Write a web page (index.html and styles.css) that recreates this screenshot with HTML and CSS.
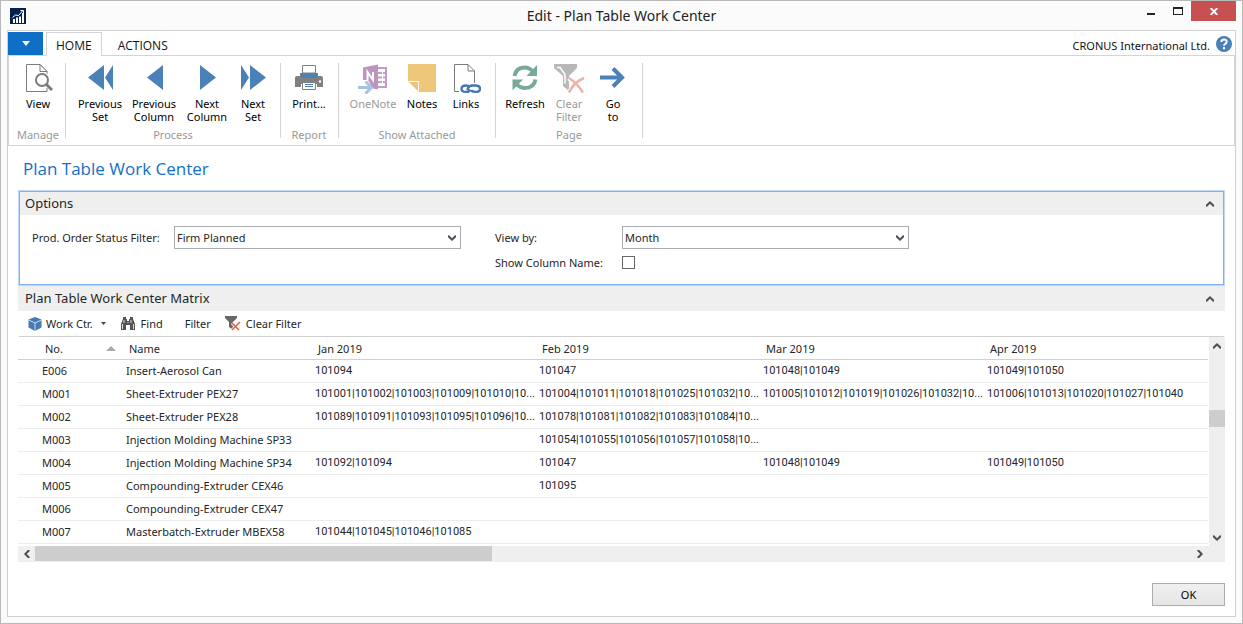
FILE: index.html
```html
<!DOCTYPE html>
<html lang="en">
<head>
<meta charset="utf-8">
<title>Edit - Plan Table Work Center</title>
<link rel="stylesheet" href="styles.css">
</head>
<body>
<svg class="defs" aria-hidden="true">
  <symbol id="chev" viewBox="0 0 8 6"><path d="M0 .8 .8 0 4 3.200 7.200 0 8 .8V2.200L4 6 0 2.200z"/></symbol>
</svg>
<div class="window">
  <header class="titlebar">
    <svg class="app-icon" viewBox="0 0 16 16"><rect width="16" height="16" fill="#06224c"/><path d="M3 11h2v4H3zM6 9.500h2V15H6zM9 8.500h2V15H9zM12 5h2v10h-2z" fill="#fff"/><path d="M2.500 9.500 5.500 7 8.500 7.500 13 2.500M10.500 2.500H13.500V5" fill="none" stroke="#fff"/></svg>
    <h1 class="window-title">Edit - Plan Table Work Center</h1>
    <div class="controls">
      <button class="ctl" aria-label="Minimize"><svg width="8" height="10" viewBox="0 0 8 10"><path d="M0 7h8v2H0z" fill="#222"/></svg></button>
      <button class="ctl" aria-label="Maximize"><svg width="10" height="8" viewBox="0 0 10 8"><path d="M0 0h10v8H0zM1 2v5h8V2z" fill="#222" fill-rule="evenodd"/></svg></button>
      <button class="ctl close" aria-label="Close"><svg width="8" height="7" viewBox="0 0 8 7"><path d="M.7 0 7.300 7M7.300 0 .7 7" stroke="#fff" stroke-width="1.900"/></svg></button>
    </div>
  </header>

  <main class="frame">
    <nav class="tabs">
      <button class="app-menu" aria-label="Application menu"><svg width="8" height="5" viewBox="0 0 8 5"><path d="M0 0h8L4 5z" fill="#fff"/></svg></button>
      <button class="tab active">HOME</button>
      <button class="tab">ACTIONS</button>
      <span class="company">CRONUS International Ltd.</span>
      <button class="help" aria-label="Help"><svg width="16" height="16" viewBox="0 0 16 16"><circle cx="8" cy="8" r="8" fill="#4a80b5"/><path d="M5.300 6c0-3.400 5.400-3.200 5.400-.3C10.700 7.700 8 7.700 8 9.800M8 11v2.200" fill="none" stroke="#fff" stroke-width="2"/></svg></button>
    </nav>

    <section class="ribbon">
      <div class="group manage">
        <div class="cmds">
          <button class="cmd"><svg width="30" height="30" viewBox="0 0 30 30"><path d="M24 24v3.500H3.500V.5H17L24 7.500V10" fill="none" stroke="#7c7c7c"/><circle cx="19" cy="16" r="8" fill="#fff"/><path d="M17 .5V7.500h7z" fill="#fff" stroke="#7c7c7c"/><circle cx="19" cy="16" r="6" fill="none" stroke="#7c7c7c" stroke-width="2"/><path d="m23.500 20.500 5.500 5.500" stroke="#7c7c7c" stroke-width="3"/></svg>View</button>
        </div>
        <div class="caption">Manage</div>
      </div>
      <div class="group">
        <div class="cmds">
          <button class="cmd wide"><svg width="30" height="30" viewBox="0 0 30 30"><path d="M3 13.500 19 1v25zM20 13.500l8-12.500v25z" fill="#4b81b9"/></svg>Previous Set</button>
          <button class="cmd wide"><svg width="30" height="30" viewBox="0 0 30 30"><path d="M8 13.500 24 1v25z" fill="#4b81b9"/></svg>Previous Column</button>
          <button class="cmd mid"><svg width="30" height="30" viewBox="0 0 30 30"><path d="M24 13.500 8 1v25z" fill="#4b81b9"/></svg>Next Column</button>
          <button class="cmd slim"><svg width="30" height="30" viewBox="0 0 30 30"><path d="M28 13.500 12 1v25zM11 13.500 3 1v25z" fill="#4b81b9"/></svg>Next Set</button>
        </div>
        <div class="caption">Process</div>
      </div>
      <div class="group report">
        <div class="cmds">
          <button class="cmd"><svg width="30" height="30" viewBox="0 0 30 30"><path d="M3 14q-2 0-2 2v7h6v-3h16v3h6v-7q0-2-2-2h-3V9h-2v6H8V9H6v5z" fill="#808080"/><path d="M3 12h24q2 0 2 2v3H1v-3q0-2 2-2z" fill="#808080"/><path d="M7 9h16v5H7z" fill="#4b81b9"/><path d="M8.500 1.500h13V9h-13z" fill="#fff" stroke="#808080"/><path d="M8.500 18.500h13v7h-13z" fill="#fff" stroke="#808080"/><path d="M11 20.500h8M11 22.500h8" stroke="#4b81b9"/><circle cx="26" cy="17.500" r="1.200" fill="#fff"/></svg>Print...</button>
        </div>
        <div class="caption">Report</div>
      </div>
      <div class="group">
        <div class="cmds">
          <button class="cmd wide" disabled><svg width="30" height="30" viewBox="0 0 30 30"><path d="M19 4h9v19h-9" fill="none" stroke="#c39dc2" stroke-width="2"/><path d="M20 9h8M20 13.500h8M20 18h8" stroke="#c39dc2" stroke-width="2"/><path d="M24.500 5v17" stroke="#fff"/><path d="M5 3.500 20 .5v25l-5-1L10 16H5z" fill="#bd94bd"/><path d="M9.500 16V8l5.500 8V8" fill="none" stroke="#fff" stroke-width="2"/><path d="M0 23.500h12M7.500 17.500l6 6-6 6" fill="none" stroke="#a8c3e0" stroke-width="3"/></svg>OneNote</button>
          <button class="cmd note"><svg width="30" height="30" viewBox="0 0 30 30"><path d="M1 0h28v28H12L1 17z" fill="#efc77b"/><path d="M1 17h11v11z" fill="#eec376"/><path d="M1.500 17.500H11.500V27" fill="none" stroke="#fff"/></svg>Notes</button>
          <button class="cmd"><svg width="30" height="30" viewBox="0 0 30 30"><path d="M8 27.500H3.500V.5H17L23.500 7v12M17 .5V7h6.500" fill="none" stroke="#7c7c7c"/><g fill="none" stroke="#4477b0" stroke-width="2.400"><path d="M19 23q-1.500-1.500-4-1.500-4.500 0-4.500 3.200t4.500 3.200q3 0 4.500-2.200"/><path d="M16.500 26q.5-4.500 5.500-4.500h2.500q4.500 0 4.500 3.200t-4.500 3.200q-3 0-4.500-1.500"/></g></svg>Links</button>
        </div>
        <div class="caption">Show Attached</div>
      </div>
      <div class="group">
        <div class="cmds">
          <button class="cmd"><svg width="30" height="30" viewBox="0 0 30 30"><g fill="none" stroke="#78ab97" stroke-width="4"><path d="M4.500 12Q6 3.500 14.500 3.500q5 0 8.500 4M25.500 15.500Q24 24 15 24q-5 0-8.500-4"/></g><path d="M27 1v11H16.500zM2.500 26.500V15.500H13z" fill="#78ab97"/></svg>Refresh</button>
          <button class="cmd" disabled><svg width="32" height="30" viewBox="0 0 32 30"><path d="M1 0h23v4l-8 8v15l-6-5V12L1 4z" fill="#b8b8b8"/><path d="M4 3.500h3l5 7v9" fill="none" stroke="#fff" stroke-width="1.500"/><path d="m16 14 14 14M31 14 16 28" stroke="#fff" stroke-width="5"/><path d="M16 14q8 5 14 14.500M31 14q-10 4-15 14.500" fill="none" stroke="#efb1a4" stroke-width="2.500"/></svg>Clear Filter</button>
          <button class="cmd go"><svg width="30" height="30" viewBox="0 0 30 30"><path d="M2 13.500h23M15 4.500l9 9-9 9" fill="none" stroke="#4b81b9" stroke-width="4"/></svg>Go<br>to</button>
        </div>
        <div class="caption">Page</div>
      </div>
    </section>

    <div class="content">
      <h2 class="page-title">Plan Table Work Center</h2>

      <section class="panel options">
        <header class="panel-head">Options<button class="collapse" aria-label="Collapse options"><svg class="chev up"><use href="#chev"/></svg></button></header>
        <div class="fields">
          <label for="status">Prod. Order Status Filter:</label>
          <span class="combo"><select id="status"><option>Firm Planned</option></select><svg class="chev"><use href="#chev"/></svg></span>
          <label for="view" class="second">View by:</label>
          <span class="combo"><select id="view"><option>Month</option></select><svg class="chev"><use href="#chev"/></svg></span>
          <label for="colname" class="second">Show Column Name:</label>
          <input type="checkbox" id="colname">
        </div>
      </section>

      <section class="panel">
        <header class="panel-head">Plan Table Work Center Matrix<button class="collapse" aria-label="Collapse matrix"><svg class="chev up"><use href="#chev"/></svg></button></header>
        <div class="toolbar">
          <button class="tool work"><svg width="14" height="14" viewBox="0 0 14 14"><path d="M7 0l6.500 2.500v8L7 14 .5 10.500v-8z" fill="#457bb5"/><path d="M.5 3 7 6l6.500-3M7 6v8" fill="none" stroke="#c8dcef"/></svg>Work Ctr.<svg class="drop" width="5" height="3" viewBox="0 0 5 3"><path d="M0 0h5L2.500 3z" fill="#444"/></svg></button>
          <button class="tool find"><svg width="16" height="14" viewBox="0 0 16 14"><path d="M3 0h3v2h1v2h2V2h1V0h3v2l2 5v6h-5V8H6v5H1V7l2-5z" fill="#555"/><path d="M2.500 7v5M4 3v3M13.500 7v5M11 3v3M8 5v1" stroke="#ddd"/></svg>Find</button>
          <button class="tool filter">Filter</button>
          <button class="tool"><svg width="16" height="15" viewBox="0 0 16 15"><path d="M0 0h12v2L8 6v8l-4-3V6L0 2z" fill="#686868"/><path d="m7 7 7 7M15 6 7 14" stroke="#fff" stroke-width="3"/><path d="m7 7 7 7M15 6 7 14" stroke="#e0613e" stroke-width="1.500"/></svg>Clear Filter</button>
        </div>
        <div class="grid">
          <div class="rows">
            <table>
              <colgroup><col class="c-no"><col class="c-name"><col><col><col><col></colgroup>
              <thead><tr><th>No.<svg class="sort" width="10" height="5" viewBox="0 0 10 5"><path d="M0 5h10L5 0z" fill="#aaa"/></svg></th><th>Name</th><th>Jan 2019</th><th>Feb 2019</th><th>Mar 2019</th><th>Apr 2019</th></tr></thead>
              <tbody>
                <tr><td>E006</td><td>Insert-Aerosol Can</td><td>101094</td><td>101047</td><td>101048|101049</td><td>101049|101050</td></tr>
                <tr><td>M001</td><td>Sheet-Extruder PEX27</td><td>101001|101002|101003|101009|101010|10...</td><td>101004|101011|101018|101025|101032|10...</td><td>101005|101012|101019|101026|101032|10...</td><td>101006|101013|101020|101027|101040</td></tr>
                <tr><td>M002</td><td>Sheet-Extruder PEX28</td><td>101089|101091|101093|101095|101096|10...</td><td>101078|101081|101082|101083|101084|10...</td><td></td><td></td></tr>
                <tr><td>M003</td><td>Injection Molding Machine SP33</td><td></td><td>101054|101055|101056|101057|101058|10...</td><td></td><td></td></tr>
                <tr><td>M004</td><td>Injection Molding Machine SP34</td><td>101092|101094</td><td>101047</td><td>101048|101049</td><td>101049|101050</td></tr>
                <tr><td>M005</td><td>Compounding-Extruder CEX46</td><td></td><td>101095</td><td></td><td></td></tr>
                <tr><td>M006</td><td>Compounding-Extruder CEX47</td><td></td><td></td><td></td><td></td></tr>
                <tr><td>M007</td><td>Masterbatch-Extruder MBEX58</td><td>101044|101045|101046|101085</td><td></td><td></td><td></td></tr>
              </tbody>
            </table>
          </div>
          <div class="vscroll">
            <button aria-label="Scroll up"><svg class="chev up"><use href="#chev"/></svg></button>
            <div class="vtrack"><div class="vthumb"></div></div>
            <button aria-label="Scroll down"><svg class="chev"><use href="#chev"/></svg></button>
          </div>
        </div>
        <div class="hscroll">
          <button aria-label="Scroll left"><svg class="chev left"><use href="#chev"/></svg></button>
          <div class="htrack"><div class="hthumb"></div></div>
          <button aria-label="Scroll right"><svg class="chev right"><use href="#chev"/></svg></button>
        </div>
      </section>
      <footer class="actions"><button class="ok">OK</button></footer>
    </div>
  </main>
</div>
</body>
</html>
```
FILE: styles.css
```css
* { box-sizing: border-box; }
body { margin: 0; font: 11px/13px "Noto Sans", "Open Sans", sans-serif; color: #262626; }
button, select, input { font: inherit; color: inherit; margin: 0; padding: 0; border: 0; background: none; border-radius: 0; }
svg { display: block; flex: none; }
.defs { position: absolute; width: 0; height: 0; }
.chev { width: 8px; height: 6px; fill: #505050; }
.chev.up { transform: rotate(180deg); }
.chev.left { transform: rotate(90deg); }
.chev.right { transform: rotate(-90deg); }

.window { min-height: 100vh; display: flex; flex-direction: column; background: #fbfbfb; border: 1px solid #b9b9b9; padding: 0 6px 6px; }
.titlebar { display: grid; grid-template-columns: 1fr auto 1fr; height: 29px; align-items: center; }
.app-icon { width: 16px; height: 16px; margin-left: 3px; }
.window-title { margin: 0; font-size: 14px; line-height: 20px; font-weight: 400; color: #222; }
.controls { display: flex; justify-content: flex-end; align-self: start; }
.ctl { width: 27px; height: 20px; display: flex; align-items: center; justify-content: center; }
.ctl.close { width: 45px; background: #c75050; }

.frame { flex: 1; display: flex; flex-direction: column; background: #fff; border: 1px solid #d0d0d0; }
.tabs { display: flex; height: 25px; padding-top: 1px; border-bottom: 1px solid #d4d4d4; color: #111; align-items: flex-start; }
.app-menu { width: 35px; height: 23px; background: #0f6fc6; display: flex; align-items: center; justify-content: center; margin-right: 3px; }
.tab { height: 24px; padding: 2px 16px 0; font-family: "Open Sans", sans-serif; font-size: 12px; }
.tab.active { padding: 2px 9px 0; background: #fff; border: 1px solid #d4d4d4; border-bottom: 0; }
.company { margin-left: auto; line-height: 27px; }
.help { margin: 4px 3px 0 6px; }

.ribbon { display: flex; height: 90px; padding: 7px 0; border: 1px solid #d4d4d4; border-top: 0; color: #000; }
.group { display: flex; flex-direction: column; padding: 0 7px; border-right: 1px solid #d4d4d4; }
.manage { padding: 0 0 0 2px; }
.report { padding: 0 2px 0 1px; }
.cmds { display: flex; flex: 1; }
.cmd { width: 44px; display: flex; flex-direction: column; align-items: center; text-align: center; justify-content: flex-start; padding-top: 1px; }
.cmd svg { margin-bottom: 3px; }
.cmd.wide, .manage .cmd, .report .cmd { width: 54px; }
.cmd.mid { width: 52px; }
.cmd.slim { width: 40px; }
.cmd:disabled { color: #999; }
.caption { text-align: center; color: #999; line-height: 14px; margin-bottom: -4px; }

.content { flex: 1; display: flex; flex-direction: column; padding: 11px 10px 10px; }
.page-title { margin: 0 0 11px 5px; font-family: "Open Sans", sans-serif; font-size: 17px; line-height: 23px; font-weight: 400; color: #1170c8; }
.panel-head { display: flex; align-items: center; justify-content: space-between; height: 25px; padding: 0 11px 0 7px; background: #efefef; font-size: 13px; }
.options { border: 1px solid #80b1f8; outline: 1px solid #bfd7fb; margin: 0 1px 1px; }
.options .panel-head { height: 23px; padding: 0 9px 0 5px; }
.fields { display: grid; grid-template-columns: 142px 287px 161px 287px; row-gap: 2px; align-items: center; padding: 11px 12px 0; min-height: 69px; align-content: start; }
.second { grid-column: 3; padding-left: 34px; }
.combo { display: grid; grid-template-columns: 1fr 17px; align-items: center; }
.combo select { grid-area: 1 / 1 / 2 / 3; appearance: none; height: 23px; border: 1px solid #ababb3; padding: 0 2px; background: #fff; }
.combo .chev { grid-area: 1 / 2; pointer-events: none; z-index: 1; margin-left: 4px; }
.fields input { appearance: none; width: 13px; height: 13px; border: 1px solid #666; background: #fff; margin: 5px 0; }

.toolbar { display: flex; height: 26px; padding: 0 9px; align-items: center; border-bottom: 1px solid #d0d0d0; margin: 0 1px; }
.tool { display: flex; align-items: center; gap: 5px; }
.work { gap: 4px; margin-right: 14px; }
.work .drop { margin-left: 4px; }
.find { margin-right: 22px; }
.filter { margin-right: 14px; }

.grid { display: flex; }
.rows { flex: 1; padding: 0 1px 2px 0; }
table { width: 100%; table-layout: fixed; border-collapse: separate; border-spacing: 0; }
.c-no { width: 105px; }
.c-name { width: 189px; }
th, td { height: 23px; padding: 0 0 1px 3px; text-align: left; font-weight: 400; border-bottom: 1px solid #ededed; white-space: nowrap; overflow: hidden; }
th { padding: 0 0 0 6px; border-color: #d0d0d0; }
td:first-child { padding-left: 24px; }
th:first-child { padding-left: 27px; }
td:nth-child(n+3) { font-family: Roboto, "Open Sans", sans-serif; }
.sort { float: right; margin: 4px 7px 0 0; }
.vscroll { width: 16px; display: flex; flex-direction: column; background: #efefef; }
.vscroll button, .hscroll button { display: flex; align-items: center; justify-content: center; width: 16px; height: 17px; }
.vtrack { flex: 1; }
.vthumb { height: 17px; margin-top: 56px; background: #cdcdcd; }
.hscroll { display: flex; background: #efefef; height: 16px; padding-right: 17px; }
.hscroll button { width: 17px; height: 15px; }
.htrack { flex: 1; }
.hthumb { width: 39.500%; height: 15px; background: #cdcdcd; }
.actions { display: flex; justify-content: flex-end; margin-top: auto; }
.ok { width: 73px; height: 23px; border: 1px solid #acacac; background: linear-gradient(#f0f0f0, #e5e5e5); color: #000; }
```
